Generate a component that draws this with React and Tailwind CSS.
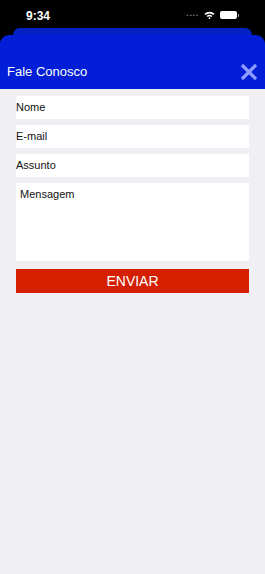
export default function App() {
  return (
    <div className="w-[265px] h-[574px] bg-black flex flex-col overflow-hidden" style={{ fontFamily: '"Liberation Sans", Arial, sans-serif' }}>
      {/* status bar */}
      <div className="h-[28px] flex items-center justify-between px-[26px] text-white shrink-0">
        <span className="text-[12px] font-semibold pt-[3px]">9:34</span>
        <div className="flex items-center gap-[5px] pt-[2px]">
          <span className="text-[6px] tracking-[1px] text-gray-500">••••</span>
          <svg width="11" height="8" viewBox="0 0 11 8">
            <path d="M0.5 2.8 A7 7 0 0 1 10.5 2.8 L9.3 4 A5.3 5.3 0 0 0 1.7 4 Z" fill="white" />
            <path d="M2.6 4.9 A4 4 0 0 1 8.4 4.9 L7.2 6.1 A2.3 2.3 0 0 0 3.8 6.1 Z" fill="white" />
            <circle cx="5.5" cy="7.2" r="0.9" fill="white" />
          </svg>
          <div className="flex items-center">
            <div className="w-[17px] h-[8px] rounded-[2px] bg-white" />
            <div className="w-[1px] h-[3px] bg-gray-400 ml-[1px]" />
          </div>
        </div>
      </div>

      {/* back sheet */}
      <div className="mx-[13px] h-[7px] bg-[#0422c4] rounded-t-[8px] shrink-0" />

      {/* header */}
      <div className="h-[54px] bg-[#021ed6] rounded-t-[9px] flex items-end justify-between pl-[7px] pr-[7px] pb-[11px] shrink-0">
        <span className="text-white text-[13px] leading-none">Fale Conosco</span>
        <svg width="18" height="18" viewBox="0 0 18 18" className="mb-[-3px]">
          <path d="M2 2 L16 16 M16 2 L2 16" stroke="#8f9cff" strokeWidth="3.2" strokeLinecap="butt" />
        </svg>
      </div>

      {/* form */}
      <div className="flex-1 bg-[#efeff4] px-[16px] pt-[7px] flex flex-col">
        <div className="h-[23px] bg-white flex items-center text-[11px] text-[#111]">Nome</div>
        <div className="h-[23px] bg-white flex items-center text-[11px] text-[#111] mt-[6px]">E-mail</div>
        <div className="h-[23px] bg-white flex items-center text-[11px] text-[#111] mt-[6px]">Assunto</div>
        <div className="h-[78px] bg-white text-[11px] text-[#111] mt-[6px] pl-[4px] pt-[3px]">Mensagem</div>
        <div className="h-[24px] bg-[#d41f00] flex items-center justify-center text-white text-[14px] mt-[8px]">ENVIAR</div>
      </div>
    </div>
  )
}
